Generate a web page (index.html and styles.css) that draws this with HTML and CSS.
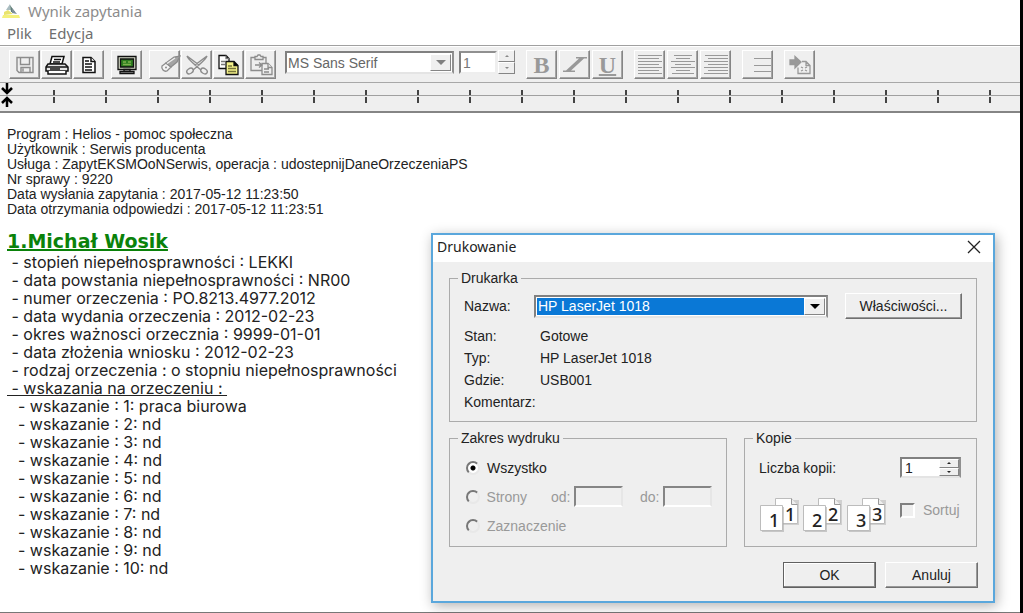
FILE: index.html
```html
<!DOCTYPE html>
<html lang="pl">
<head>
<meta charset="utf-8">
<title>Wynik zapytania</title>
<link rel="stylesheet" href="styles.css">
</head>
<body>
<div class="window">
  <header class="titlebar">
    <svg class="app-icon" width="18" height="16" viewBox="0 0 18 16"><path d="M8 1 4 7h5z" fill="#a9bcc0"/><path d="M8 2 13 9H9z" fill="#607f78"/><path d="M10 5l5 6-5-1z" fill="#7d8f96"/><path d="M2 9l4-2 5 4-9 1z" fill="#e9e36c"/><path d="M1 12h16l1 3H0z" fill="#f4f07a"/></svg>
    <h1 class="title">Wynik zapytania</h1>
  </header>
  <nav class="menubar">
    <a class="menu-item" href="#plik">Plik</a>
    <a class="menu-item" href="#edycja">Edycja</a>
  </nav>

  <div class="toolbar" role="toolbar" aria-label="Narzędzia">
    <div class="group">
      <button class="tool" aria-label="Zapisz"><svg width="22" height="20" viewBox="0 0 22 20" fill="none" stroke="#8c8c8c" stroke-width="1.4"><path d="M3 2.500h16v15H5l-2-2zM6.500 2.500v7h9v-7M7 17.500v-5h9v5M9 13.500v3"/></svg></button>
      <button class="tool" aria-label="Drukuj"><svg width="26" height="22" viewBox="0 0 26 22" fill="#fff" stroke="#111" stroke-width="1.5"><path d="M6 10 8 2.500h12L18 10z"/><path d="M10 5.500h7M9 8h7" /><path d="M4 10h17l3 3v4H2v-4z" fill="#e4e4e4"/><path d="M2 13h22M4 17v3h18v-3M6 15h10"/></svg></button>
      <button class="tool" aria-label="Podgląd"><svg width="20" height="20" viewBox="0 0 20 20" fill="#fff" stroke="#111" stroke-width="1.500"><path d="M4 2.500h8l4 4v11H4z"/><path d="M12 2.500v4h4M6 6h4M6 9h7M6 12h7M6 15h7"/></svg></button>
    </div>
    <div class="group">
      <button class="tool" aria-label="Ekran"><svg width="22" height="20" viewBox="0 0 22 20" stroke="#111" stroke-width="1.300"><path d="M2 1.500h18v13H2z" fill="#d7dcc8"/><path d="M4.500 4h13v8h-13z" fill="#2c7d1e"/><path d="M7 7h3M12 7h3M7 9.500h8" stroke="#7db04c"/><path d="M8 14.500h6v2H8zM4 16.500h14v2H4z" fill="#bbb"/></svg></button>
    </div>
    <div class="group">
      <button class="tool" aria-label="Wymaż"><svg class="shift" width="24" height="20" viewBox="0 0 24 20" fill="#f4f4f4" stroke="#8c8c8c" stroke-width="1.300"><path d="M5 11 9 8l5 4-4 4c-3 1-6-2-5-5z"/><path d="M9 8 17 2l6-1-3 6-6 5z" fill="#a4a4a4"/><path d="M10 8.500 18 3" stroke="#eee"/><circle cx="9" cy="12.500" r="1" fill="#8c8c8c" stroke="none"/></svg></button>
      <button class="tool" aria-label="Wytnij"><svg width="24" height="22" viewBox="0 0 24 22" fill="none" stroke="#8c8c8c" stroke-width="1.400"><path d="M2 2c1 3 5 6 8 9l6 5M22 2c-1 3-5 6-8 9l-6 5M2 2l12 9M22 2 10 11"/><ellipse cx="5" cy="17" rx="3.500" ry="2.500" transform="rotate(-35 5 17)"/><ellipse cx="19" cy="17" rx="3.500" ry="2.500" transform="rotate(35 19 17)"/></svg></button>
      <button class="tool" aria-label="Kopiuj"><svg width="24" height="22" viewBox="0 0 24 22" stroke="#111" stroke-width="1.300"><path d="M2 1.500h7l3 3v10H2z" fill="#fff"/><path d="M9 1.500v3h3M4 7.500h4M4 10.500h4" stroke="#777"/><path d="M9 7.500h8l4 4v9H9z" fill="#f3f08a"/><path d="M17 7.500v4h4"/><path d="M11 12h4M11 14.500h8M11 17.500h8" stroke="#77753a"/></svg></button>
      <button class="tool" aria-label="Wklej"><svg width="26" height="22" viewBox="0 0 26 22" fill="#eee" stroke="#8c8c8c" stroke-width="1.300"><path d="M3 3.500h15v13H3z"/><path d="M7 5.500v-3h2l1-1.500h2l1 1.500h2v3z"/><path d="M14 9.500h6l4 4v7H14z"/><path d="M20 9.500v4h4M16 15h5M16 18h5M7 11h7M11 8.500l3 2.500-3 2.500"/></svg></button>
    </div>
    <div class="combo combo-font">
      <select class="combo-value" aria-label="Czcionka" disabled><option>MS Sans Serif</option></select>
      <span class="combo-arrow"></span>
    </div>
    <div class="size">
      <input class="size-value" type="text" value="1" aria-label="Rozmiar" disabled>
      <div class="steps">
        <button class="step up" aria-label="Większy"></button>
        <button class="step down" aria-label="Mniejszy"></button>
      </div>
    </div>
    <div class="group wide">
      <button class="tool letter">B</button>
      <button class="tool" aria-label="Kursywa"><svg width="26" height="20" viewBox="0 0 26 20"><path d="M14 2h11v1.500h-3L9 15.500h4V17H1v-1.500h3L17 3.500h-3z" fill="#999"/></svg></button>
      <button class="tool letter underlined">U</button>
    </div>
    <div class="group wide">
      <button class="tool" aria-label="Do lewej"><svg width="26" height="22" viewBox="0 0 26 22" stroke="#999"><path d="M1 1.500h24M1 4.500h21M1 7.500h24M1 10.500h21M1 13.500h24M1 16.500h21M1 19.500h24"/></svg></button>
      <button class="tool" aria-label="Do środka"><svg width="26" height="22" viewBox="0 0 26 22" stroke="#999"><path d="M4 1.500h18M6 4.500h14M1 7.500h24M5 10.500h16M1 13.500h24M6 16.500h14M2 19.500h22"/></svg></button>
      <button class="tool" aria-label="Do prawej"><svg width="26" height="22" viewBox="0 0 26 22" stroke="#999"><path d="M2 1.500h23M5 4.500h20M1 7.500h24M5 10.500h20M1 13.500h24M5 16.500h20M1 19.500h24"/></svg></button>
    </div>
    <div class="group spaced">
      <button class="tool" aria-label="Lista"><svg class="shift" width="20" height="20" viewBox="0 0 20 20" stroke="#999"><path d="M2 3.500h17M2 10.500h17M2 16.500h17"/></svg></button>
    </div>
    <div class="group spaced">
      <button class="tool" aria-label="Wstaw"><svg width="24" height="20" viewBox="0 0 24 20" fill="none" stroke="#999" stroke-width="1.300"><path d="M2 5h5V1.500L13 7l-6 6V9.500H2z" fill="#999"/><path d="M14 6.500h4l4 4v8H10v-6M18 6.500v4h4M13 12l2 1M17 13l2-1M13 16l2-1M17 15l2 1"/></svg></button>
    </div>
  </div>

  <div class="ruler">
    <svg class="ruler-marks" width="14" height="28" viewBox="0 0 14 28" fill="none" stroke="#000" stroke-width="2.500"><path d="M7 0v9M2 5l5 5 5-5M7 24v-8M2 20l5-5 5 5"/></svg>
    <div class="ticks"></div>
  </div>

  <main class="document">
    <div class="info">
      <p>Program : Helios - pomoc społeczna</p>
      <p>Użytkownik : Serwis producenta</p>
      <p>Usługa : ZapytEKSMOoNSerwis, operacja : udostepnijDaneOrzeczeniaPS</p>
      <p>Nr sprawy : 9220</p>
      <p>Data wysłania zapytania : 2017-05-12 11:23:50</p>
      <p>Data otrzymania odpowiedzi : 2017-05-12 11:23:51</p>
    </div>
    <h2 class="person">1.Michał Wosik</h2>
    <div class="details">
      <p> - stopień niepełnosprawności : LEKKI</p>
      <p> - data powstania niepełnosprawności : NR00</p>
      <p> - numer orzeczenia : PO.8213.4977.2012</p>
      <p> - data wydania orzeczenia : 2012-02-23</p>
      <p> - okres ważnosci orzecznia : 9999-01-01</p>
      <p> - data złożenia wniosku : 2012-02-23</p>
      <p> - rodzaj orzeczenia : o stopniu niepełnosprawności</p>
      <p><u> - wskazania na orzeczeniu : </u></p>
    </div>
    <div class="details nested">
      <p>- wskazanie : 1: praca biurowa</p>
      <p>- wskazanie : 2: nd</p>
      <p>- wskazanie : 3: nd</p>
      <p>- wskazanie : 4: nd</p>
      <p>- wskazanie : 5: nd</p>
      <p>- wskazanie : 6: nd</p>
      <p>- wskazanie : 7: nd</p>
      <p>- wskazanie : 8: nd</p>
      <p>- wskazanie : 9: nd</p>
      <p>- wskazanie : 10: nd</p>
    </div>
  </main>

  <form class="dialog" role="dialog" aria-labelledby="dialog-title">
    <div class="dialog-head">
      <h2 class="dialog-title" id="dialog-title">Drukowanie</h2>
      <button class="close" type="button" aria-label="Zamknij"><svg width="14" height="14" viewBox="0 0 14 14" stroke="#222" stroke-width="1.300"><path d="M1 1l12 12M13 1 1 13"/></svg></button>
    </div>
    <div class="dialog-body">
      <fieldset class="box">
        <legend>Drukarka</legend>
        <div class="printer-row">
          <label for="printer">Nazwa:</label>
          <div class="combo combo-printer">
            <select class="combo-value" id="printer"><option>HP LaserJet 1018</option></select>
            <span class="combo-arrow"></span>
          </div>
          <button class="push" type="button">Właściwości...</button>
        </div>
        <dl class="facts">
          <dt>Stan:</dt><dd>Gotowe</dd>
          <dt>Typ:</dt><dd>HP LaserJet 1018</dd>
          <dt>Gdzie:</dt><dd>USB001</dd>
          <dt>Komentarz:</dt><dd></dd>
        </dl>
      </fieldset>
      <div class="columns">
        <fieldset class="box">
          <legend>Zakres wydruku</legend>
          <div class="range-row">
            <input class="radio" type="radio" name="range" id="all" checked><label for="all">Wszystko</label>
          </div>
          <div class="range-row off">
            <input class="radio" type="radio" name="range" id="pages" disabled><label class="pages-label" for="pages">Strony</label>
            <label class="from-label" for="from">od:</label><input class="page-field" type="text" id="from" disabled>
            <label class="to-label" for="to">do:</label><input class="page-field" type="text" id="to" disabled>
          </div>
          <div class="range-row off">
            <input class="radio" type="radio" name="range" id="selection" disabled><label for="selection">Zaznaczenie</label>
          </div>
        </fieldset>
        <fieldset class="box">
          <legend>Kopie</legend>
          <div class="copies">
            <label for="copies">Liczba kopii:</label>
            <div class="spin">
              <input class="spin-value" type="text" id="copies" value="1">
              <div class="spin-steps">
                <button class="step up" type="button" aria-label="Więcej"></button>
                <button class="step down" type="button" aria-label="Mniej"></button>
              </div>
            </div>
            <svg class="sheets" width="130" height="38" viewBox="0 0 130 38">
              <defs>
                <g id="sheet"><path d="M2 2h22v25H2z" fill="#bbb" opacity=".6"/><path d="M.5.5h16l6 6v19H.5z" fill="#fff" stroke="#bcbcbc"/><path d="M16.500.5v6h6" fill="#eee" stroke="#999"/></g>
                <g id="front"><path d="M2 2h22v25H2z" fill="#aaa" opacity=".6"/><path d="M.5.5h22v25H.5z" fill="#fff" stroke="#bcbcbc"/></g>
              </defs>
              <use href="#sheet" x="16" y="1"/><use href="#front" x="1" y="8"/>
              <use href="#sheet" x="59" y="1"/><use href="#front" x="44" y="8"/>
              <use href="#sheet" x="103" y="1"/><use href="#front" x="88" y="8"/>
              <text x="26" y="24">1</text><text x="10" y="30">1</text>
              <text x="69" y="24">2</text><text x="53" y="30">2</text>
              <text x="113" y="24">3</text><text x="97" y="30">3</text>
            </svg>
            <div class="sort off">
              <input class="check" type="checkbox" id="sort" disabled><label for="sort">Sortuj</label>
            </div>
          </div>
        </fieldset>
      </div>
      <div class="actions">
        <button class="push default" type="button">OK</button>
        <button class="push" type="button">Anuluj</button>
      </div>
    </div>
  </form>
</div>
</body>
</html>
```

FILE: styles.css
```css
* { box-sizing: border-box; }

body {
  margin: 0;
  background: #000;
  font-family: "Liberation Sans", Arial, sans-serif;
}

h1, h2, p, dl, dd { margin: 0; }

button, input, select {
  font: inherit;
  color: inherit;
  margin: 0;
  border-radius: 0;
}

.window {
  position: relative;
  display: flex;
  flex-direction: column;
  min-height: 100vh;
  margin-right: 3px;
  background: #fff;
  border-bottom: 1px solid #777;
}

.titlebar {
  display: flex;
  align-items: center;
  gap: 8px;
  height: 21px;
  padding-left: 2px;
}

.title {
  font: 15px/20px "Noto Sans", sans-serif;
  color: #8c8c8c;
}

.menubar {
  display: flex;
  gap: 17px;
  height: 24px;
  padding-left: 7px;
}

.menu-item {
  font: 15px/24px "Noto Sans", sans-serif;
  color: #6e6e6e;
  text-decoration: none;
}

/* Toolbar */

.toolbar {
  display: flex;
  align-items: flex-start;
  gap: 7px;
  height: 38px;
  padding: 4px 9px 0;
  background: #efefef;
  border-top: 1px solid #a0a0a0;
  border-bottom: 1px solid #a8a8a8;
  box-shadow: inset 0 1px #fff;
}

.group {
  display: flex;
  gap: 1px;
}

.group.wide { gap: 2px; }
.group.wide,
.group.spaced { margin-left: 4px; }

.tool {
  display: flex;
  align-items: center;
  justify-content: center;
  width: 31px;
  height: 29px;
  padding: 0;
  background: #efefef;
  border: 1px solid;
  border-color: #fff #858585 #858585 #fff;
  box-shadow: inset -1px -1px #a5a5a5;
}

.tool svg { flex: none; }
.tool .shift { margin-left: 8px; }

.letter {
  font: bold 24px/24px "Liberation Serif", serif;
  color: #999;
}

.underlined {
  text-decoration: underline;
  text-decoration-thickness: 2px;
}

.combo {
  display: flex;
  height: 23px;
  padding: 1px;
  background: #fff;
  border: 2px solid;
  border-color: #808080 #909090 #e4e4e4 #808080;
}

.combo-value {
  flex: 1;
  min-width: 0;
  padding: 0 1px;
  border: 0;
  appearance: none;
  background: #fff;
  opacity: 1;
}

.combo-arrow {
  display: grid;
  place-items: center;
  width: 21px;
  background: #efefef;
  border: 1px solid;
  border-color: #fff #858585 #858585 #fff;
}

.combo-arrow::after {
  content: "";
  border: 5px solid transparent;
  border-top-color: #808080;
  border-bottom: 0;
}

.combo-font {
  width: 169px;
  margin: 1px -2px 0 2px;
  font-size: 14px;
  color: #666;
}

.combo-font .combo-value { padding: 0; }

.size {
  display: flex;
  gap: 1px;
}

.size-value {
  width: 38px;
  height: 23px;
  margin-top: 1px;
  padding: 0 2px;
  font-size: 14px;
  color: #777;
  background: #fff;
  border: 2px solid;
  border-color: #909090 #eee #eee #808080;
}

.steps, .spin-steps {
  display: flex;
  flex-direction: column;
  width: 17px;
}

.step {
  display: grid;
  place-items: center;
  flex: 1;
  min-height: 10px;
  padding: 0;
  background: #efefef;
  border: 1px solid;
  border-color: #fff #858585 #858585 #fff;
}

.steps .step { height: 12px; flex: none; }

.step::after {
  content: "";
  border: 2px solid transparent;
}

.up::after { border-bottom-color: currentColor; border-top: 0; }
.down::after { border-top-color: currentColor; border-bottom: 0; }
.steps { color: #888; }

/* Ruler */

.ruler {
  display: flex;
  height: 30px;
  background: #efefef;
  border-bottom: 2px solid #858585;
}

.ticks {
  flex: 1;
  margin-left: -14px;
  background:
    linear-gradient(#a0a0a0, #a0a0a0) 0 12px / 100% 1px no-repeat,
    linear-gradient(#efefef, #efefef) 0 13px / 100% 1px no-repeat,
    repeating-linear-gradient(90deg, #444 0 2px, transparent 2px 52px) 53px 7px / 100% 13px no-repeat;
}

.ruler-marks {
  flex: none;
  z-index: 1;
}

/* Document */

.document {
  flex: 1;
  padding: 14px 7px 20px;
  color: #222;
}

.info { font-size: 14px; line-height: 15px; }

.person {
  margin-top: 13px;
  font: bold 19px/23px "DejaVu Sans", sans-serif;
  color: #0a820a;
  text-decoration: underline;
  text-decoration-thickness: 2px;
}

.details {
  display: flex;
  flex-direction: column;
  font-family: Inter, sans-serif;
  font-size: 16px;
  line-height: 18px;
  white-space: pre;
}

.details p { height: 18px; }
.nested { padding-left: 11px; }

/* Print dialog */

.dialog {
  position: absolute;
  left: 431px;
  top: 233px;
  width: 564px;
  background: #efefef;
  border: 2px solid #5aa7dc;
  box-shadow: 2px 3px 12px rgba(0, 0, 0, 0.3);
  font-size: 14px;
  line-height: 16px;
  color: #222;
}

.dialog-head {
  display: flex;
  align-items: center;
  justify-content: space-between;
  height: 27px;
  padding: 0 12px 3px 4px;
  background: #fff;
}

.dialog-title { font: 14px/20px "Noto Sans", sans-serif; }

.close {
  display: flex;
  padding: 0;
  background: none;
  border: 0;
}

.dialog-body { padding: 8px 15px 13px 16px; }

.box {
  min-width: 0;
  margin: 0 1px 0 0;
  padding: 7px 14px 6px;
  border: 1px solid #ababab;
}

.box legend {
  margin-left: -6px;
  padding: 0 3px;
}

.printer-row {
  display: grid;
  grid-template-columns: 70px 294px 134px;
  align-items: center;
  justify-content: start;
  height: 26px;
}

.printer-row .push { width: 117px; margin-left: 17px; }

.combo-printer .combo-value { background: #0a78d6; color: #fff; }
.combo-printer .combo-arrow::after { border-top-color: #000; }

.facts {
  display: grid;
  grid-template-columns: 76px 1fr;
  grid-auto-rows: 22px;
  align-items: center;
  padding: 6px 0 2px;
}

.columns {
  display: grid;
  grid-template-columns: 279px 1fr;
  gap: 16px;
  margin-top: 8px;
}

.range-row {
  display: flex;
  align-items: center;
  height: 29px;
}

.radio {
  appearance: none;
  width: 14px;
  height: 14px;
  margin: 0 7px 0 2px;
  background: #fff;
  border: 2px solid;
  border-color: #777 #e8e8e8 #e8e8e8 #777;
  border-radius: 50%;
}

.radio:checked {
  background: radial-gradient(circle, #000 0 2px, #fff 3px);
}

.radio:disabled { background: #efefef; }

.off { color: #999; }

.pages-label { width: 67px; }
.from-label { width: 24px; }
.to-label { width: 24px; margin-left: 17px; }

.page-field {
  width: 49px;
  height: 21px;
  padding: 0 3px;
  background: #efefef;
  border: 2px solid;
  border-color: #858585 #e6e6e6 #fff #858585;
}

.copies {
  display: grid;
  grid-template-columns: 141px 61px;
  grid-template-rows: 29px 58px;
  align-items: center;
}

.spin {
  display: flex;
  height: 21px;
  background: #fff;
  border: 2px solid;
  border-color: #808080 #909090 #e4e4e4 #808080;
}

.spin-value {
  flex: 1;
  min-width: 0;
  padding: 0 3px;
  border: 0;
  background: #fff;
}

.spin-steps { width: 20px; }
.spin-steps .step { min-height: 0; height: 9px; }

.sheets {
  margin-top: 10px;
  font: 500 18px "Noto Sans", sans-serif;
  fill: #222;
}

.sort {
  display: flex;
  align-items: center;
  gap: 8px;
  padding-bottom: 2px;
}

.check {
  appearance: none;
  flex: none;
  width: 15px;
  height: 15px;
  background: #efefef;
  border: 2px solid;
  border-color: #808080 #fff #fff #808080;
}

.actions {
  display: flex;
  justify-content: flex-end;
  gap: 9px;
  margin-top: 15px;
}

.push {
  width: 93px;
  height: 26px;
  padding: 0;
  background: #efefef;
  border: 1px solid;
  border-color: #fff #707070 #707070 #fff;
  box-shadow: inset -1px -1px #999;
}

.push.default {
  border: 1px solid #606060;
  box-shadow: inset -1px -1px #888, inset 1px 1px #fff;
}
```
